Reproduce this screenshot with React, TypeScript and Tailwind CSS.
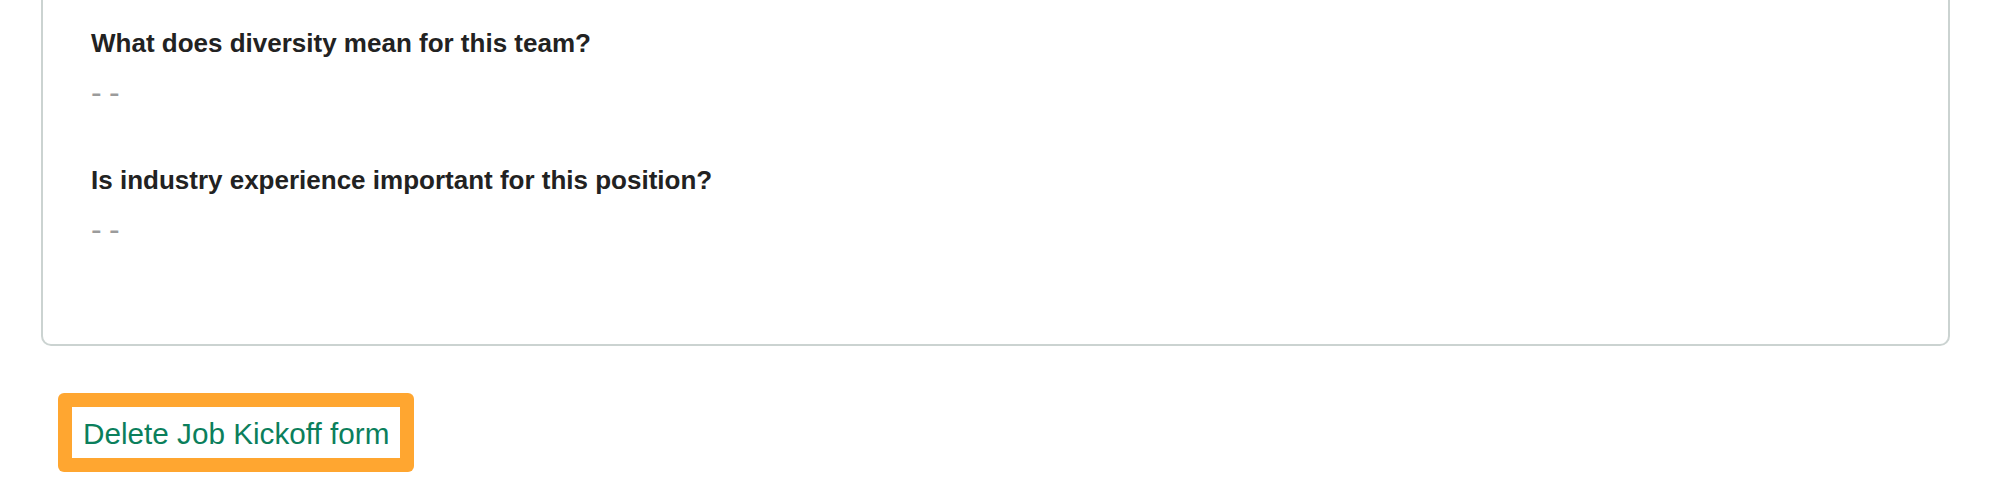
import React from "react";

const questions = [
  "What does diversity mean for this team?",
  "Is industry experience important for this position?",
];

export default function App() {
  return (
    <div
      className="min-h-[492px] w-full bg-white"
      style={{ fontFamily: '"Liberation Sans", Arial, sans-serif' }}
    >
      <div className="ml-[41px] mr-[40px] rounded-b-[10px] border-x-2 border-b-2 border-[#cbd3d1] pl-[48px] pt-[27px] pb-[99px]">
        <div className="flex flex-col gap-[56px]">
          {questions.map((q) => (
            <div key={q} className="flex flex-col gap-[17px]">
              <h3 className="text-[26px] font-bold leading-[32px] text-[#222222]">{q}</h3>
              <div className="text-[32px] leading-[32px] tracking-[-0.8px] text-[#9b9b9b]">- -</div>
            </div>
          ))}
        </div>
      </div>
      <div className="ml-[58px] mt-[47px] flex w-fit rounded-[6px] bg-[#ffa630] p-[14px] pb-[14px]">
        <button className="h-[51px] w-[328px] bg-white pl-[11px] pt-[2px] text-left text-[29.7px] leading-[48px] text-[#0b7f5c]">
          Delete Job Kickoff form
        </button>
      </div>
    </div>
  );
}
